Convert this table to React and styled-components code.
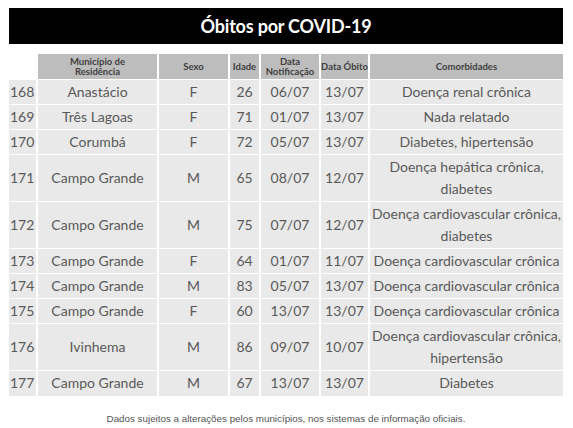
import styled, { createGlobalStyle } from "styled-components";

const rows = [
  ["168", "Anastácio", "F", "26", "06/07", "13/07", ["Doença renal crônica"]],
  ["169", "Três Lagoas", "F", "71", "01/07", "13/07", ["Nada relatado"]],
  ["170", "Corumbá", "F", "72", "05/07", "13/07", ["Diabetes, hipertensão"]],
  ["171", "Campo Grande", "M", "65", "08/07", "12/07", ["Doença hepática crônica,", "diabetes"]],
  ["172", "Campo Grande", "M", "75", "07/07", "12/07", ["Doença cardiovascular crônica,", "diabetes"]],
  ["173", "Campo Grande", "F", "64", "01/07", "11/07", ["Doença cardiovascular crônica"]],
  ["174", "Campo Grande", "M", "83", "05/07", "13/07", ["Doença cardiovascular crônica"]],
  ["175", "Campo Grande", "F", "60", "13/07", "13/07", ["Doença cardiovascular crônica"]],
  ["176", "Ivinhema", "M", "86", "09/07", "10/07", ["Doença cardiovascular crônica,", "hipertensão"]],
  ["177", "Campo Grande", "M", "67", "13/07", "13/07", ["Diabetes"]],
];

const widths = [28, 121, 71, 31, 60, 49, 194];

export default function App() {
  return (
    <>
      <GlobalStyle />
      <Page>
        <TitleBar>Óbitos por COVID-19</TitleBar>
        <Table>
          <colgroup>
            {widths.map((w, i) => (
              <col key={i} style={{ width: w }} />
            ))}
          </colgroup>
          <thead>
            <tr>
              <Blank />
              <Head>Município de<br />Residência</Head>
              <Head>Sexo</Head>
              <Head>Idade</Head>
              <Head>Data<br />Notificação</Head>
              <Head>Data Óbito</Head>
              <Head>Comorbidades</Head>
            </tr>
          </thead>
          <tbody>
            {rows.map((r) => (
              <Row key={r[0]} $tall={r[6].length > 1}>
                <Num>{r[0]}</Num>
                <Cell>{r[1]}</Cell>
                <Cell>{r[2]}</Cell>
                <Cell>{r[3]}</Cell>
                <Cell>{r[4]}</Cell>
                <Cell>{r[5]}</Cell>
                <Cell>
                  {r[6].map((line, i) => (
                    <Line key={i}>{line}</Line>
                  ))}
                </Cell>
              </Row>
            ))}
          </tbody>
        </Table>
        <Footer>
          Dados sujeitos a alterações pelos municípios, nos sistemas de informação oficiais.
        </Footer>
      </Page>
    </>
  );
}

const GlobalStyle = createGlobalStyle`
  body {
    margin: 0;
    background: #ffffff;
  }
`;

const Page = styled.div`
  width: 573px;
  height: 428px;
  padding: 8px 10px 0 9px;
  box-sizing: border-box;
  font-family: "Lato", "Open Sans", sans-serif;
`;

const TitleBar = styled.div`
  height: 36px;
  background: #000000;
  color: #ffffff;
  font-weight: 700;
  font-size: 18px;
  letter-spacing: -0.2px;
  display: flex;
  align-items: center;
  justify-content: center;
  margin-bottom: 10px;
`;

const Table = styled.table`
  width: 554px;
  table-layout: fixed;
  border-collapse: collapse;
`;

const Blank = styled.th`
  background: #ffffff;
`;

const Head = styled.th`
  height: 25px;
  padding: 0;
  background: #bdbdbd;
  color: #404040;
  font-size: 9.5px;
  font-weight: 700;
  line-height: 10px;
  text-align: center;
  white-space: nowrap;
  border-left: 2px solid #ffffff;
`;

const Row = styled.tr`
  height: ${(p) => (p.$tall ? "47px" : "25px")};
  border-top: 1px solid #ffffff;
`;

const Cell = styled.td`
  padding: 0;
  background: #e9e9e9;
  color: #595959;
  font-size: 14px;
  line-height: 22px;
  text-align: center;
  white-space: nowrap;
  border-left: 2px solid #ffffff;
`;

const Num = styled(Cell)`
  text-align: left;
  padding-left: 1px;
  border-left: none;
`;

const Line = styled.div``;

const Footer = styled.div`
  margin-top: 17px;
  font-family: "Liberation Sans", Arial, sans-serif;
  font-size: 9.8px;
  color: #555555;
  text-align: center;
`;
